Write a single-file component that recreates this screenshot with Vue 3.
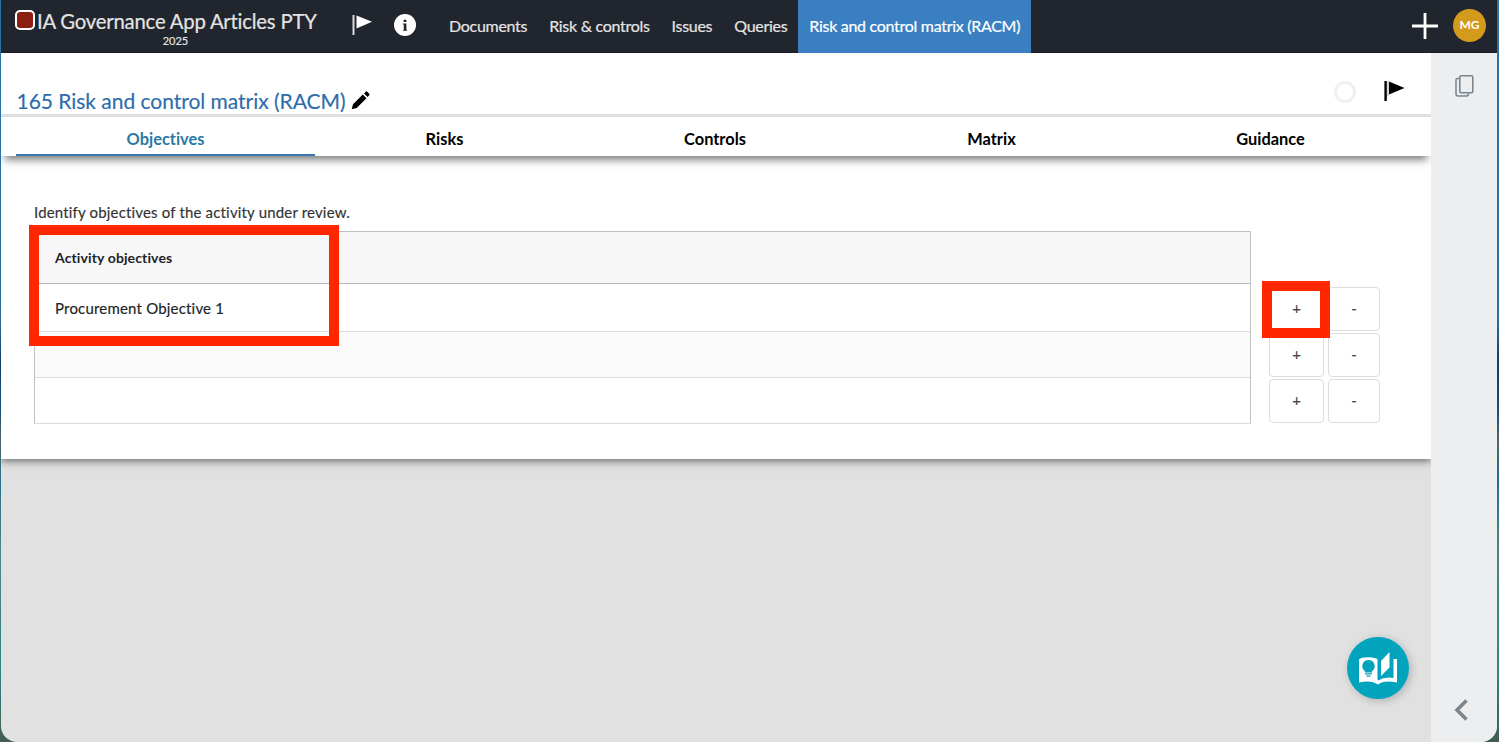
<script setup>
const nav = ['Documents', 'Risk & controls', 'Issues', 'Queries', 'Risk and control matrix (RACM)']
const tabs = ['Objectives', 'Risks', 'Controls', 'Matrix', 'Guidance']
const rows = ['Procurement Objective 1', '', '']
</script>

<template>
  <div class="desktop">
    <div class="window">
      <header class="topbar">
        <div class="brand">
          <div class="brand-line"><i class="stop"></i><span class="t-brand">IA Governance App Articles PTY</span></div>
          <div class="year">2025</div>
        </div>
        <svg class="flag" width="22" height="22" viewBox="0 0 22 22"><path d="M1.500 1v20" stroke="#dcdcdd" stroke-width="2" /><path d="M4.500 1.500L20 7.800L4.500 14.500z" fill="#fff" /></svg>
        <svg class="info" width="22" height="22" viewBox="0 0 22 22"><circle cx="11" cy="11" r="11" fill="#fff" /><path d="M9.600 5.800h2.800v2.200h-2.800zM8.800 9.500h3.600v6.300H13v.9H9.200v-.9h.6v-5.200h-1z" fill="#21252d" /></svg>
        <nav class="nav">
          <a v-for="(n, i) in nav" :key="n" :class="{ active: i === 4 }">{{ n }}</a>
        </nav>
        <svg class="add" width="28" height="28" viewBox="0 0 28 28"><path d="M14 1v26M1 14h26" stroke="#fff" stroke-width="2.800" /></svg>
        <div class="avatar">MG</div>
      </header>
      <div class="body">
        <main class="main">
          <section class="sheet">
            <div class="title-row">
              <h1>165 Risk and control matrix (RACM)</h1>
              <svg class="pencil" width="19" height="19" viewBox="0 0 19 19"><path d="M.7 18.300L2 13.300L11.800 3.500L15.500 7.200L5.700 17zM13 2.400L14.800.7Q15.500 0 16.300.8L18.200 2.700Q19 3.500 18.200 4.200L16.600 5.900z" fill="#000" /></svg>
              <i class="ring"></i>
              <svg class="flag2" width="22" height="22" viewBox="0 0 22 22"><path d="M1.600 1v20" stroke="#000" stroke-width="2.400" /><path d="M4 1v15" stroke="#aaa" stroke-width="1" /><path d="M5 1.500L20.500 8L5 14.500z" fill="#000" /></svg>
            </div>
            <div class="tabs">
              <div v-for="(t, i) in tabs" :key="t" class="tab" :class="{ on: i === 0 }"><span>{{ t }}</span></div>
            </div>
            <div class="content">
              <p class="intro">Identify objectives of the activity under review.</p>
              <div class="grid-area">
                <div class="table">
                  <div class="thead"><span>Activity objectives</span></div>
                  <div v-for="(r, i) in rows" :key="i" class="row"><span>{{ r }}</span></div>
                  <i class="mark mark-table"></i>
                </div>
                <div class="actions">
                  <template v-for="(r, i) in rows" :key="i">
                    <button>+</button><button>-</button>
                  </template>
                  <i class="mark mark-add"></i>
                </div>
              </div>
            </div>
          </section>
          <div class="help">
            <svg width="38" height="34" viewBox="0 0 38 34">
              <path d="M0 8.500Q1 6.500 9 6.300Q17 6.500 18.500 8.500V30H0z" fill="#fff" />
              <path d="M0 31.500V27.500Q12 25.500 19 29.500Q26 25.500 34.500 27V8H38V31.500Q25 28.500 19 33.500Q12 28.500 0 31.500z" fill="#fff" />
              <path d="M22 10L30.500 1V16.500L22 25z" fill="#fff" />
              <path d="M9.500 9a6.200 6.200 0 0 1 3.500 11.300v1.200H6V20.300A6.200 6.200 0 0 1 9.500 9z" fill="#02a3bd" />
              <path d="M6 22.300h7v1.300H6zM7.500 24.500h4v1.300h-4z" fill="#02a3bd" />
            </svg>
          </div>
        </main>
        <aside class="side">
          <svg class="copy" width="19" height="24" viewBox="0 0 19 24"><rect x="4.800" y="1.800" width="13" height="17" rx="1.500" fill="none" stroke="#7b858d" stroke-width="1.600" /><path d="M4 4.500H2.500Q1 4.500 1 6V20Q1 22 3 22H11.500Q13.500 22 13.500 19.500" fill="none" stroke="#7b858d" stroke-width="1.500" /></svg>
          <svg class="chev" width="15" height="22" viewBox="0 0 15 22"><path d="M12.500 1.500L3 11L12.500 20.500" fill="none" stroke="#7b858d" stroke-width="3.600" /></svg>
        </aside>
      </div>
    </div>
  </div>
</template>

<style>
body { margin: 0; overflow: hidden; }
</style>

<style scoped>
* { box-sizing: border-box; }
.desktop { width: 1499px; height: 742px; padding: 0 2px 0 1px; font-family: Lato, sans-serif; font-variant-ligatures: none; background: linear-gradient(#2873aa 0, #2b6e9f 320px, #153e65 360px, #174d74 410px, #54636a 440px, #24718b 480px, #4a8584 550px, #2f8583 670px, #405c53 100%); }
.window { height: 742px; border-radius: 0 0 16px 16px; overflow: hidden; display: flex; flex-direction: column; background: #e1e1e1; }
.topbar { height: 53px; flex: none; background: #21252d; display: flex; align-items: flex-start; color: #e4e4e4; border-bottom: 1px solid #1c1c26; }
.brand { width: 316px; margin-left: 14px; height: 52px; flex: none; }
.brand-line { display: flex; height: 34px; }
.stop { width: 20px; height: 20px; margin: 10px 2px 0 0; flex: none; border: 2px solid #fff; border-radius: 5px; background: #8c1d11; }
.t-brand { font-size: 20.3px; letter-spacing: -.2px; line-height: 24px; margin-top: 9px; white-space: nowrap; -webkit-text-stroke: .2px; }
.year { font-size: 11px; line-height: 14px; width: 321px; text-align: center; -webkit-text-stroke: .2px; }
.flag { margin: 14px 0 0 21px; flex: none; }
.info { margin: 14px 0 0 20px; flex: none; }
.nav { display: flex; margin-left: 22px; height: 53px; }
.nav a { padding: 0 11px; line-height: 52px; font-size: 16px; letter-spacing: -.29px; white-space: nowrap; -webkit-text-stroke: .2px; }
.nav .active { background: #397fc2; color: #fff; }
.add { margin: 12px 14px 0 auto; flex: none; }
.avatar { width: 33px; height: 33px; border-radius: 50%; background: #d49a1c; color: #fff; font-weight: 700; font-size: 12px; line-height: 32px; text-align: center; margin: 9px 11px 0 0; flex: none; }
.body { flex: 1; display: flex; min-height: 0; }
.main { width: 1430px; flex: none; position: relative; overflow: hidden; }
.sheet { height: 406px; background: #fff; box-shadow: 0 2px 8px rgba(0,0,0,.55); }
.title-row { height: 64px; border-bottom: 3px solid #dfdfdf; display: flex; align-items: flex-start; padding-left: 15.5px; }
h1 { margin: 35px 0 0; font-weight: 400; font-size: 21px; letter-spacing: -.03px; line-height: 26px; color: #2d6cac; white-space: nowrap; -webkit-text-stroke: .15px; }
.pencil { margin: 38px 0 0 5px; }
.ring { width: 22px; height: 22px; border: 3px solid #efefef; border-radius: 50%; margin: 28px 28px 0 auto; }
.flag2 { margin: 27px 25px 0 0; }
.tabs { height: 39px; display: grid; grid-template-columns: 299px 259px 282px 271px 287px; padding: 0 15px; background: #fff; box-shadow: 0 8px 8px -4px rgba(0,0,0,.5); }
.tab { text-align: center; font-weight: 700; font-size: 16.4px; line-height: 44px; color: #000; height: 39px; }
.on { color: #297aa5; border-bottom: 2px solid #3c79b0; }
.content { padding: 46px 0 0 33px; }
.intro { margin: 0; font-size: 15px; letter-spacing: .17px; line-height: 20px; height: 29px; color: #333; -webkit-text-stroke: .15px; }
.grid-area { display: flex; }
.table { position: relative; width: 1217px; height: 193px; border: 1px solid #bfc1c3; border-bottom-color: #d8dbe2; font-size: 15px; color: #202427; flex: none; border-radius: 1px; }
.thead { height: 52px; background: #f7f7f7; border-bottom: 1px solid #b7b8b9; padding-left: 20px; line-height: 51px; font-weight: 700; font-size: 14px; letter-spacing: .12px; }
.row { height: 46px; padding-left: 20px; border-bottom: 1px solid #d8dbe2; letter-spacing: .19px; -webkit-text-stroke: .15px; }
.row:nth-child(2) { height: 48px; line-height: 49px; }
.row:nth-child(3) { background: #fafafa; }
.row:nth-child(4) { border: 0; height: 45px; }
.actions { position: relative; display: grid; grid-template-columns: 55px 52px; grid-auto-rows: 44px; gap: 2px 4px; margin: 56px 0 0 18px; }
button { border: 1px solid #dddddf; border-radius: 4px; background: #fff; color: #444; font: 15px Lato, sans-serif; padding: 0 0 2px; -webkit-text-stroke: .2px; }
.mark { position: absolute; border: 10px solid #ff2600; }
.mark-table { left: -6px; top: -7px; width: 310px; height: 121px; }
.mark-add { left: -7px; top: -6px; width: 68px; height: 57px; }
.help { position: absolute; left: 1346px; top: 584px; width: 62px; height: 62px; border-radius: 50%; background: #02a3bd; box-shadow: 2px 2px 8px rgba(0,0,0,.22); display: flex; align-items: center; justify-content: center; }
.side { flex: 1; background: #edeef0; display: flex; flex-direction: column; }
.copy { margin: 21px 0 0 24px; }
.chev { margin: auto 0 21px 23px; }
</style>
